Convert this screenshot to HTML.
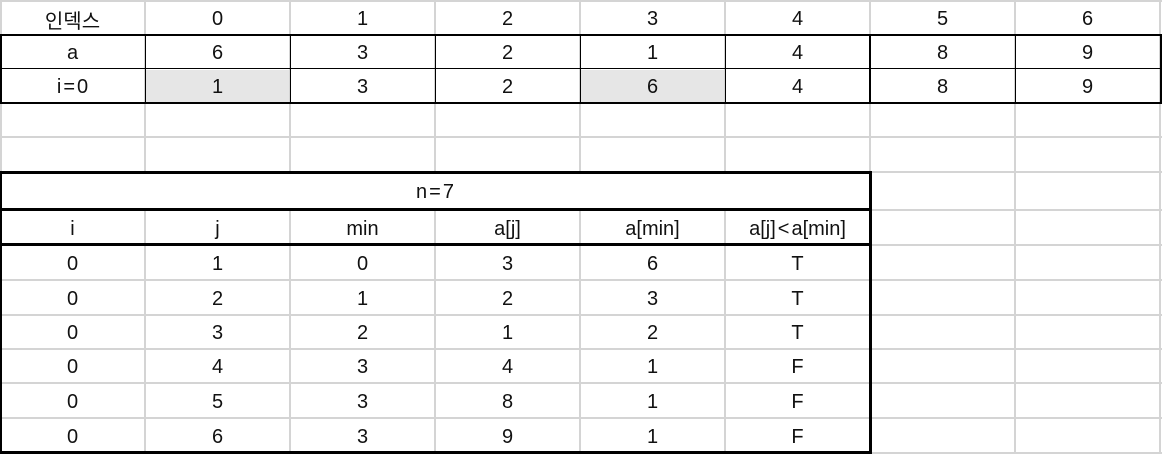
<!DOCTYPE html>
<html><head><meta charset="utf-8"><style>
html,body{margin:0;padding:0;background:#fff;width:1167px;height:459px;overflow:hidden;position:relative;font-family:"Liberation Sans","Noto Sans CJK KR",sans-serif;}
.h{position:absolute;left:0;width:1162px;height:2px;background:#d4d4d4;}
.v{position:absolute;top:0;width:2px;height:454px;background:#d4d4d4;}
.b{position:absolute;background:#000;}
.r{position:absolute;left:0;height:34px;width:1160px;display:flex;}
.r div,.q div{width:145px;text-align:center;font-size:20px;color:#111;display:flex;align-items:center;justify-content:center;padding-top:3px;box-sizing:border-box;}
.q{position:absolute;left:0;width:870px;display:flex;}
.e{margin:0 2px;}
</style></head><body>
<div class="b" style="left:146px;top:70px;width:144px;height:33px;background:#e6e6e6"></div>
<div class="b" style="left:581px;top:70px;width:144px;height:33px;background:#e6e6e6"></div>

<div class="h" style="top:0"></div><div class="h" style="top:136px"></div><div class="h" style="top:244px"></div><div class="h" style="top:279px"></div><div class="h" style="top:314px"></div><div class="h" style="top:348px"></div><div class="h" style="top:382px"></div><div class="h" style="top:417px"></div><div class="h" style="top:452px"></div><div class="h" style="top:171px"></div><div class="h" style="top:209px"></div>
<div class="v" style="left:0"></div><div class="v" style="left:144px"></div><div class="v" style="left:289px"></div><div class="v" style="left:434px"></div><div class="v" style="left:579px"></div><div class="v" style="left:724px"></div><div class="v" style="left:869px"></div><div class="v" style="left:1014px"></div><div class="v" style="left:1159px"></div>

<div class="b" style="left:2px;top:174px;width:867px;height:34px;background:#fff"></div>

<div class="b" style="left:0;top:34px;width:1162px;height:2px"></div>
<div class="b" style="left:0;top:68px;width:1162px;height:1px"></div>
<div class="b" style="left:0;top:102px;width:1162px;height:2px"></div>
<div class="b" style="left:0;top:35px;width:2px;height:68px"></div>
<div class="b" style="left:145px;top:35px;width:1px;height:68px"></div>
<div class="b" style="left:290px;top:35px;width:1px;height:68px"></div>
<div class="b" style="left:435px;top:35px;width:1px;height:68px"></div>
<div class="b" style="left:580px;top:35px;width:1px;height:68px"></div>
<div class="b" style="left:725px;top:35px;width:1px;height:68px"></div>
<div class="b" style="left:869px;top:35px;width:2px;height:68px"></div>
<div class="b" style="left:1015px;top:35px;width:1px;height:68px"></div>
<div class="b" style="left:1160px;top:35px;width:2px;height:68px"></div>

<div class="b" style="left:0;top:171px;width:872px;height:3px"></div>
<div class="b" style="left:0;top:208px;width:872px;height:3px"></div>
<div class="b" style="left:0;top:243px;width:872px;height:3px"></div>
<div class="b" style="left:0;top:451px;width:872px;height:3px"></div>
<div class="b" style="left:0;top:171px;width:2px;height:283px"></div>
<div class="b" style="left:869px;top:171px;width:3px;height:283px"></div>

<div class="r" style="top:1px"><div>인덱스</div><div>0</div><div>1</div><div>2</div><div>3</div><div>4</div><div>5</div><div>6</div></div>
<div class="r" style="top:35px"><div>a</div><div>6</div><div>3</div><div>2</div><div>1</div><div>4</div><div>8</div><div>9</div></div>
<div class="r" style="top:69px"><div>i<span class="e">=</span>0</div><div>1</div><div>3</div><div>2</div><div>6</div><div>4</div><div>8</div><div>9</div></div>

<div class="q" style="top:173px;height:36px"><div style="width:870px">n<span class="e">=</span>7</div></div>
<div class="q" style="top:210px;height:35px"><div>i</div><div>j</div><div>min</div><div>a[j]</div><div>a[min]</div><div>a[j]<span class="e">&lt;</span>a[min]</div></div>
<div class="q" style="top:245px;height:35px"><div>0</div><div>1</div><div>0</div><div>3</div><div>6</div><div>T</div></div>
<div class="q" style="top:280px;height:35px"><div>0</div><div>2</div><div>1</div><div>2</div><div>3</div><div>T</div></div>
<div class="q" style="top:315px;height:34px"><div>0</div><div>3</div><div>2</div><div>1</div><div>2</div><div>T</div></div>
<div class="q" style="top:349px;height:34px"><div>0</div><div>4</div><div>3</div><div>4</div><div>1</div><div>F</div></div>
<div class="q" style="top:383px;height:35px"><div>0</div><div>5</div><div>3</div><div>8</div><div>1</div><div>F</div></div>
<div class="q" style="top:418px;height:35px"><div>0</div><div>6</div><div>3</div><div>9</div><div>1</div><div>F</div></div>
</body></html>
